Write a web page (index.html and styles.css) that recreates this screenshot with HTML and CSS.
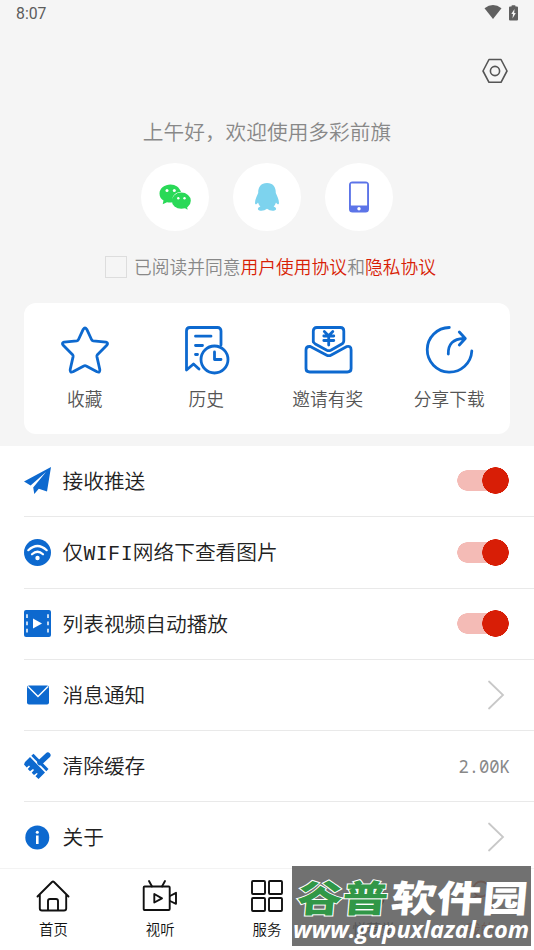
FILE: index.html
```html
<!DOCTYPE html>
<html lang="zh-CN">
<head>
<meta charset="utf-8">
<title>我的</title>
<link rel="stylesheet" href="styles.css">
</head>
<body>
<div class="screen">
  <header class="profile">
    <div class="status">
      <span>8:07</span>
      <div class="status-icons">
        <svg width="18" height="15" viewBox="0 0 18 15"><path d="M.5 3.2Q9-3 17.500 3.200L9 14Z"/></svg>
        <svg width="9" height="16" viewBox="0 0 9 16"><path fill-rule="evenodd" d="M2.500 1Q2.500.2 3.300.2H5.700Q6.500.2 6.500 1V1.500H8Q9 1.500 9 2.500V14.500Q9 15.500 8 15.500H1Q0 15.500 0 14.500V2.500Q0 1.500 1 1.500H2.500ZM5.500 4L2.300 9H4L3.500 13.500L6.800 8H5.200Z"/></svg>
      </div>
    </div>
    <div class="settings">
      <svg width="26" height="26" viewBox="0 0 26 26"><path d="M7 1.500H19L25 13L19 24.300H7L1 13Z"/><circle cx="13" cy="13" r="4.600"/></svg>
    </div>
    <h1>上午好，欢迎使用多彩前旗</h1>
    <div class="logins">
      <span class="login"><svg width="34" height="34" viewBox="0 0 34 34"><path fill="#29d957" d="M12.500 4.500C6.700 4.500 1.500 8.300 1.500 13.500C1.500 16.800 3 19 5.500 20.600L4.700 24.300L9 22.200Q12 23 14.500 22.200C13 16.500 17.500 11.800 23 11.900C21.500 7.500 17.500 4.500 12.500 4.500Z"/><ellipse cx="23.300" cy="20.700" rx="9.500" ry="8.100" fill="#29d957"/><path fill="#29d957" d="M25 27L29.600 29.700L28.800 25Z"/><g fill="#fff"><circle cx="9" cy="10.500" r="1.500"/><circle cx="16.300" cy="10.500" r="1.500"/><circle cx="20.300" cy="18.300" r="1.200"/><circle cx="26.500" cy="18.300" r="1.200"/></g></svg></span>
      <span class="login"><svg width="26" height="32" viewBox="0 0 26 32"><path fill="#7dd3ee" d="M13 2C7 2 4 6 4.200 12C3 15 1 18 1 22C1.200 24.500 3 23 4 21.500Q4.700 24 6.400 25.500C3.300 26.500 3 29 6 29.700Q10 30.300 13 27.800Q16 30.300 20 29.700C23 29 22.700 26.500 19.600 25.500Q21.300 24 22 21.500C23 23 24.800 24.500 25 22C25 18 23 15 21.800 12C22 6 19 2 13 2Z"/></svg></span>
      <span class="login"><svg width="22" height="32" viewBox="0 0 22 32"><rect x="1" y=".5" width="20" height="31" rx="3.500" fill="#5c74e8"/><rect x="2.900" y="2.600" width="16.200" height="21.800" rx=".5" fill="#fff"/><circle cx="11" cy="27.700" r="1.700" fill="#fff"/></svg></span>
    </div>
    <div class="agree"><i class="check"></i><span>已阅读并同意<b>用户使用协议</b>和<b>隐私协议</b></span></div>
    <div class="card">
      <div class="action"><svg width="50" height="50" viewBox="0 0 50 50"><path d="M23.300 4.200Q25 1.800 26.700 4.200L31.500 14.500Q32 15.600 33.200 15.800L46 17.200Q48.500 17.800 47 20L37.400 29.700Q36.700 30.500 36.900 31.600L39.800 44.500Q40.300 48 37 46.800L26.200 41Q25 40.400 23.800 41L13 46.800Q9.700 48 10.200 44.500L13.100 31.600Q13.300 30.500 12.600 29.700L3 20Q1.500 17.800 4 17.200L16.800 15.800Q18 15.600 18.500 14.500Z"/></svg><span>收藏</span></div>
      <div class="action"><svg width="50" height="50" viewBox="0 0 50 50"><g transform="translate(1 0)"><path d="M39 20V6Q39 2.500 35.500 2.500H8Q4.500 2.500 4.500 6V45L11.500 39L17 44"/><path d="M13.500 11.200H29M13.500 20.500H20.500M13.500 29.500H15.500M32.500 27V34.500H39"/><circle cx="32.500" cy="34.500" r="13.500"/></g></svg><span>历史</span></div>
      <div class="action"><svg width="50" height="50" viewBox="0 0 50 50"><g transform="translate(.8 0)"><path d="M9.500 17V6Q9.500 2.500 13 2.500H36.500Q40 2.500 40 6V15.500Q40 18 38 19L27 25.200Q25 26.200 23 25.200L11.500 19Q9.500 18 9.500 16Z"/><path d="M6.500 21.500H5.500Q2.200 21.500 2.200 25V43.500Q2.200 47 6 47H43.500Q47.300 47 47.300 43.500V25Q47.300 20.500 43 21.500L27.500 30Q25 31.400 22.500 30Z"/><path d="M20.500 6.500L24.800 10.700L29 6.500M20 11H30M20 15.500H30M24.900 10.700V20"/></g></svg><span>邀请有奖</span></div>
      <div class="action"><svg width="50" height="50" viewBox="0 0 50 50"><g transform="translate(.8 0)"><path d="M24.500 2.500A22.300 22.300 0 1 0 47 26"/><path d="M23.500 29Q23 14 39 13.500M34.500 7L40.500 13.500L34.500 20"/></g></svg><span>分享下载</span></div>
    </div>
  </header>

  <main class="list">
    <div class="row"><svg width="27" height="27" viewBox="0 0 27 27"><path fill="#0d69cf" d="M27 0L23 24.500L14.800 21.700L10.300 27L9.200 20.500L22 5L6.600 18.500L0 14.500Z"/></svg><span>接收推送</span><i class="toggle"></i></div>
    <div class="row"><svg width="27" height="27" viewBox="0 0 27 27"><circle cx="13.500" cy="13.500" r="13.500" fill="#0d69cf"/><g fill="none" stroke="#fff" stroke-width="2.200" stroke-linecap="round"><path d="M4.300 11.200Q13.500 2.800 22.700 11.200M8 15.300Q13.500 10.200 19 15.300"/></g><circle cx="13.500" cy="19" r="2.200" fill="#fff"/></svg><span>仅<b>WIFI</b>网络下查看图片</span><i class="toggle"></i></div>
    <div class="row"><svg width="27" height="27" viewBox="0 0 27 27"><rect width="27" height="27" rx="2" fill="#0d69cf"/><path fill="#fff" d="M9 8.500L18 13.500L9 18.500Z"/><path stroke="#fff" stroke-width="1.500" fill="none" stroke-dasharray="3.800 3.500" d="M3 4.200V23M24 4.200V23"/></svg><span>列表视频自动播放</span><i class="toggle"></i></div>
    <div class="row"><svg width="27" height="27" viewBox="0 0 27 27"><rect x="3" y="4.500" width="22" height="19" rx="2" fill="#0d69cf"/><path d="M4 5.500L14 15.500L24 5.500" fill="none" stroke="#fff" stroke-width="1.500"/></svg><span>消息通知</span><svg class="arrow" width="18" height="30" viewBox="0 0 18 30"><path d="M2 1.500L16 15L2 28.500"/></svg></div>
    <div class="row"><svg width="27" height="27" viewBox="0 0 27 27"><path d="M16 10.500L23.800 3.200" stroke="#0d69cf" stroke-width="5.500" stroke-linecap="round"/><path fill="#0d69cf" d="M7.300 3.700L9.500 1.700L24.500 17L22.300 19.200Z"/><path fill="#0d69cf" d="M6 5L21 20.500L14.500 27L11.500 24.300L13.700 21.800L12.800 20.900L10 23L7.700 20.700L10 18L9 17L6 19.300L3.800 17L6 14.500L5 13.600L2.700 15.500L0 12.500L1 10Z"/></svg><span>清除缓存</span><em>2.00K</em></div>
    <div class="row"><svg width="27" height="27" viewBox="0 0 27 27"><circle cx="13.300" cy="13.500" r="12" fill="#0d69cf"/><circle cx="13.300" cy="8.300" r="1.500" fill="#fff"/><path stroke="#fff" stroke-width="2.600" fill="none" d="M13.300 11.500V20"/></svg><span>关于</span><svg class="arrow" width="18" height="30" viewBox="0 0 18 30"><path d="M2 1.500L16 15L2 28.500"/></svg></div>
  </main>

  <nav class="tabs">
    <div class="tab"><svg width="36" height="36" viewBox="0 0 36 36"><path d="M2.500 18.500L17 4Q18 3 19 4L33.500 18.500M4.800 16.500V30.500Q4.800 32.500 7 32.500H29Q31.200 32.500 31.200 30.500V16.500M13 32V23Q13 21 15 21H21Q23 21 23 23V32"/></svg><span>首页</span></div>
    <div class="tab"><svg width="36" height="36" viewBox="0 0 36 36"><rect x="1.700" y="8.500" width="26" height="23.500" rx="1"/><path d="M7 3L10 8.500M23 3L20 8.500M12.300 16V24.500L20 20.300ZM28 18L34 14.800V25.800L28 23"/></svg><span>视听</span></div>
    <div class="tab"><svg width="36" height="36" viewBox="0 0 36 36"><rect x="3" y="3" width="13" height="13" rx="1"/><rect x="20" y="3" width="13" height="13" rx="1"/><rect x="3" y="20" width="13" height="13" rx="1"/><rect x="20" y="20" width="13" height="13" rx="1"/></svg><span>服务</span></div>
    <div class="tab"><svg width="36" height="36" viewBox="0 0 36 36"><path d="M18 32C5 31 2 17 10 10Q11 16 15 18Q13 9 20 3Q20 11 26 13Q32 25 18 32Z" fill="#000"/></svg><span>悦荐堂</span></div>
    <div class="tab active"><svg width="36" height="36" viewBox="0 0 36 36"><circle cx="18" cy="11" r="7.500"/><path d="M14 18Q5 22 5 32M22 18Q31 22 31 32"/></svg><span>我的</span></div>
  </nav>
  <div class="watermark">
    <svg width="239" height="80" viewBox="0 0 239 80">
      <g class="mark-name"><text class="mark-green" x="0" y="0" textLength="91" lengthAdjust="spacingAndGlyphs" transform="translate(4 46) skewX(-5) scale(1 .86)">谷普</text><text class="mark-white" x="0" y="0" textLength="137" lengthAdjust="spacingAndGlyphs" transform="translate(98 46) skewX(-5) scale(1 .86)">软件园</text></g>
      <text class="mark-url" x="1" y="72" textLength="236" lengthAdjust="spacingAndGlyphs">www.gupuxlazal.com</text>
    </svg>
  </div>
</div>
</body>
</html>
```
FILE: styles.css
```css
* { box-sizing: border-box; }
body { margin: 0; background: #fff; }
svg { display: block; flex: none; }
.screen {
  position: relative;
  width: 534px;
  height: 950px;
  overflow: hidden;
  display: flex;
  flex-direction: column;
  background: #fff;
  font-family: "Noto Sans CJK SC", sans-serif;
  font-weight: 350;
}
.profile { height: 446px; flex: none; background: #f5f5f5; }
.status {
  height: 28px;
  padding: 0 15px 0 16px;
  display: flex;
  justify-content: space-between;
  color: #5c5c5c;
  font: 400 15.8px/28px Roboto, sans-serif;
}
.status-icons { display: flex; gap: 7px; padding-top: 5px; margin-right: 1px; fill: #606060; }
.settings { height: 84px; padding: 30px 26px 0 0; display: flex; justify-content: flex-end; }
.settings svg { fill: none; stroke: #555; stroke-width: 1.6; stroke-linejoin: round; }
h1 {
  margin: 0;
  height: 40px;
  text-align: center;
  color: #888;
  font-size: 20.7px;
  font-weight: 350;
  line-height: 38px;
}
.logins { margin-top: 11px; display: flex; justify-content: center; gap: 24px; }
.login {
  width: 68px;
  height: 68px;
  border-radius: 50%;
  background: #fff;
  display: flex;
  align-items: center;
  justify-content: center;
}
.agree {
  height: 72px;
  padding-left: 7px;
  display: flex;
  align-items: center;
  justify-content: center;
  gap: 7px;
  color: #888;
  font-size: 17.75px;
}
.agree span { line-height: 28px; margin-bottom: 2px; }
.agree b { color: #d81e06; font-weight: 350; }
.check { width: 22px; height: 22px; border: 1px solid #ddd; }
.card {
  height: 131px;
  margin: 0 24px;
  padding-top: 22px;
  border-radius: 12px;
  background: #fff;
  display: grid;
  grid-template-columns: repeat(4, 1fr);
}
.action { display: flex; flex-direction: column; align-items: center; }
.action svg { fill: none; stroke: #0d69cf; stroke-width: 2.8; stroke-linecap: round; stroke-linejoin: round; }
.action span { margin-top: 8px; color: #555; font-size: 17.7px; line-height: 30px; }
.list { height: 422px; flex: none; padding-left: 23.5px; overflow: hidden; }
.row {
  height: 71.25px;
  padding-right: 24px;
  border-bottom: 1px solid #e9e9e9;
  display: flex;
  align-items: center;
  color: #222;
  font-family: "Noto Sans Mono", "DejaVu Sans Mono", "Noto Sans CJK SC", monospace;
  font-size: 20.7px;
}
.row svg:first-child { margin-bottom: .3px; }
.row span { margin-left: 12px; flex: 1; line-height: 30px; }
.row b { font-weight: 400; }
.row em { color: #888; font-size: 17.2px; font-style: normal; font-weight: 400; }
.arrow { margin-right: 5px; fill: none; stroke: #c8c8c8; stroke-width: 1.8; stroke-linecap: round; }
.toggle {
  width: 52px;
  height: 27px;
  background:
    radial-gradient(circle 13.5px at 38.500px 13.500px, #d81e06 13px, transparent 13.500px),
    linear-gradient(#f4bbb6, #f4bbb6) 10px 3px / 30px 21px no-repeat,
    radial-gradient(circle 10.5px at 10.500px 13.500px, #f4bbb6 10px, transparent 10.500px);
  margin: 0 1px .3px 0;
}
.tabs {
  height: 82px;
  flex: none;
  padding-top: 9px;
  border-top: 1px solid #f3f3f3;
  background: #fff;
  display: grid;
  grid-template-columns: repeat(5, 1fr);
}
.tab { display: flex; flex-direction: column; align-items: center; color: #111; }
.tab svg { fill: none; stroke: #111; stroke-width: 1.9; stroke-linejoin: round; stroke-linecap: round; }
.tab span { margin-top: 3px; font-size: 14.4px; line-height: 24px; white-space: nowrap; }
.tab.active { color: #d84e20; }
.tab.active svg { stroke: #d84e20; }
.watermark {
  position: absolute;
  left: 292px;
  top: 866px;
  width: 239px;
  height: 80px;
  background: rgba(92, 92, 92, .87);
}
.mark-name { font: 900 43px "Noto Sans CJK SC", sans-serif; }
.mark-green { fill: #319747; stroke: #fff; stroke-width: 2.2; paint-order: stroke; }
.mark-white { fill: #fff; }
.mark-url { font: italic 700 23px "Open Sans", sans-serif; fill: #fff; }
```
